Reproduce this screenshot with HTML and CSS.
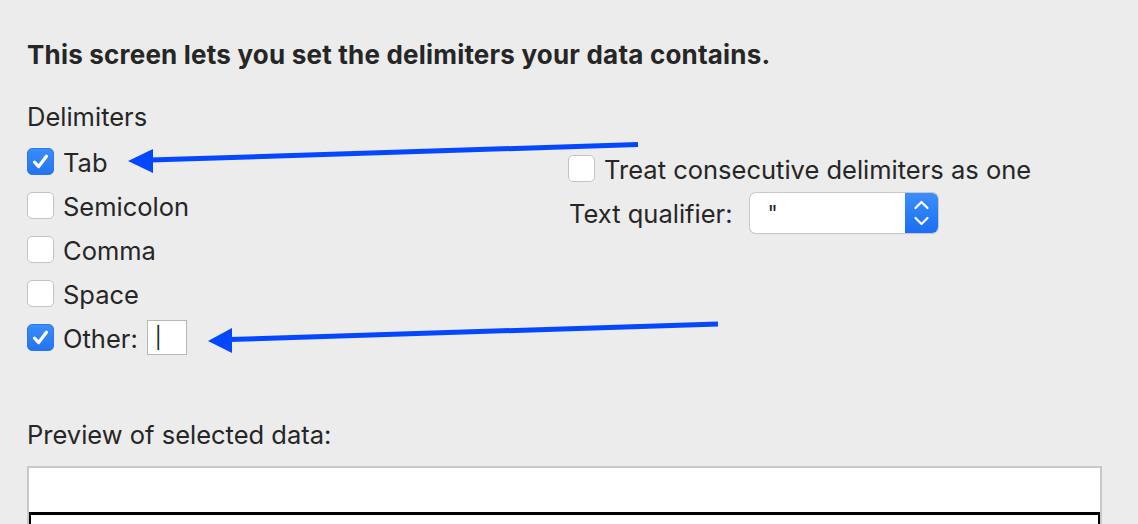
FILE: index.html
```html
<!DOCTYPE html>
<html>
<head>
<meta charset="utf-8">
<link rel="stylesheet" href="styles.css">
</head>
<body>
<div class="page">
  <h1 class="title">This screen lets you set the delimiters your data contains.</h1>
  <div class="section-label">Delimiters</div>
  <div class="options">
    <div class="col-left">
      <div class="row"><span class="cb checked"><svg viewBox="0 0 20 20"><path d="M4.8 10.6 L8.4 14.4 L15.2 5.4"/></svg></span><span class="lbl">Tab</span></div>
      <div class="row"><span class="cb"></span><span class="lbl">Semicolon</span></div>
      <div class="row"><span class="cb"></span><span class="lbl">Comma</span></div>
      <div class="row"><span class="cb"></span><span class="lbl">Space</span></div>
      <div class="row"><span class="cb checked"><svg viewBox="0 0 20 20"><path d="M4.8 10.6 L8.4 14.4 L15.2 5.4"/></svg></span><span class="lbl">Other:</span><span class="other-box">|</span></div>
    </div>
    <div class="col-right">
      <div class="row"><span class="cb"></span><span class="lbl">Treat consecutive delimiters as one</span></div>
      <div class="qual-row"><span class="lbl">Text qualifier:</span>
        <span class="select"><span class="select-val">"</span><span class="select-btn"><svg viewBox="0 0 32 40"><path d="M10 15 L16 9 L22 15 M10 25 L16 31 L22 25"/></svg></span></span>
      </div>
    </div>
  </div>
  <div class="preview-label">Preview of selected data:</div>
  <div class="preview"><div class="preview-inner"></div></div>
</div>
<svg class="arrows" width="1138" height="524" viewBox="0 0 1138 524">
  <line x1="638" y1="144.5" x2="150" y2="160" />
  <polygon points="128,161 153,149 153,173" />
  <line x1="718" y1="324" x2="229" y2="339.5" />
  <polygon points="208,341 232,328 232,353" />
</svg>
</body>
</html>
```
FILE: styles.css
```css
html, body {
  margin: 0;
  padding: 0;
  background: #ececec;
  width: 1138px;
  height: 524px;
  overflow: hidden;
}
body {
  font-family: Inter, "Noto Sans", "Liberation Sans", sans-serif;
  color: #262626;
  position: relative;
}
.page {
  padding: 39px 0 0 27px;
}
.title {
  font-size: 26px;
  font-weight: 700;
  margin: 0;
  line-height: 32px;
  letter-spacing: 0.2px;
}
.section-label {
  font-size: 25.5px;
  line-height: 32px;
  margin-top: 30px;
}
.options {
  display: flex;
  margin-top: 15px;
}
.col-left {
  width: 541px;
  display: flex;
  flex-direction: column;
  gap: 17px;
}
.row {
  display: flex;
  align-items: center;
  height: 27px;
}
.cb {
  width: 27px;
  height: 27px;
  box-sizing: border-box;
  border-radius: 5px;
  background: #fff;
  border: 1px solid #c4c4c4;
  flex: none;
  display: flex;
  align-items: center;
  justify-content: center;
}
.cb.checked {
  background: linear-gradient(#3a8cf8, #2474f2);
  border-color: #2a78ef;
}
.cb svg {
  width: 23px;
  height: 23px;
}
.cb svg path {
  fill: none;
  stroke: #fff;
  stroke-width: 2.8;
  stroke-linecap: round;
  stroke-linejoin: round;
}
.lbl {
  font-size: 25.5px;
  line-height: 32px;
  margin-left: 9px;
  margin-top: 2px;
  white-space: nowrap;
}
.qual-row .lbl {
  margin-left: 1px;
}
.other-box {
  width: 40px;
  height: 35px;
  flex: none;
  box-sizing: border-box;
  background: #fff;
  border: 1px solid #b8b8b8;
  margin-left: 9px;
  font-size: 21px;
  line-height: 33px;
  padding-left: 7px;
  color: #1e1e1e;
  font-weight: 400;
}
.col-right {
  padding-top: 7px;
  display: flex;
  flex-direction: column;
}
.qual-row {
  display: flex;
  align-items: center;
  margin-top: 11px;
}
.select {
  margin-left: 18px;
  width: 188px;
  height: 40px;
  box-sizing: border-box;
  background: #fff;
  border-radius: 6px;
  box-shadow: 0 0 0 1px #c8c8c8, 0 1px 1px rgba(0,0,0,0.15);
  display: flex;
  overflow: hidden;
}
.select-val {
  flex: 1;
  font-size: 22px;
  line-height: 40px;
  padding-left: 17px;
}
.select-btn {
  width: 33px;
  height: 40px;
  background: linear-gradient(#3b8ef9, #1a6ef3);
  display: flex;
}
.select-btn svg {
  width: 33px;
  height: 40px;
}
.select-btn svg path {
  fill: none;
  stroke: #fff;
  stroke-width: 2.2;
  stroke-linecap: round;
  stroke-linejoin: round;
}
.preview-label {
  font-size: 25.5px;
  line-height: 32px;
  margin-top: 68px;
}
.preview {
  margin-top: 15px;
  width: 1075px;
  height: 58px;
  overflow: hidden;
  box-sizing: border-box;
  background: #fff;
  border: 2px solid #c8c8c8;
  border-bottom: 0;
  padding-top: 44px;
}
.preview-inner {
  height: 40px;
  border: 2px solid #000;
  border-top-width: 3px;
}
.arrows {
  position: absolute;
  left: 0;
  top: 0;
  pointer-events: none;
}
.arrows line {
  stroke: #0546ff;
  stroke-width: 5;
}
.arrows polygon {
  fill: #0546ff;
}
```
